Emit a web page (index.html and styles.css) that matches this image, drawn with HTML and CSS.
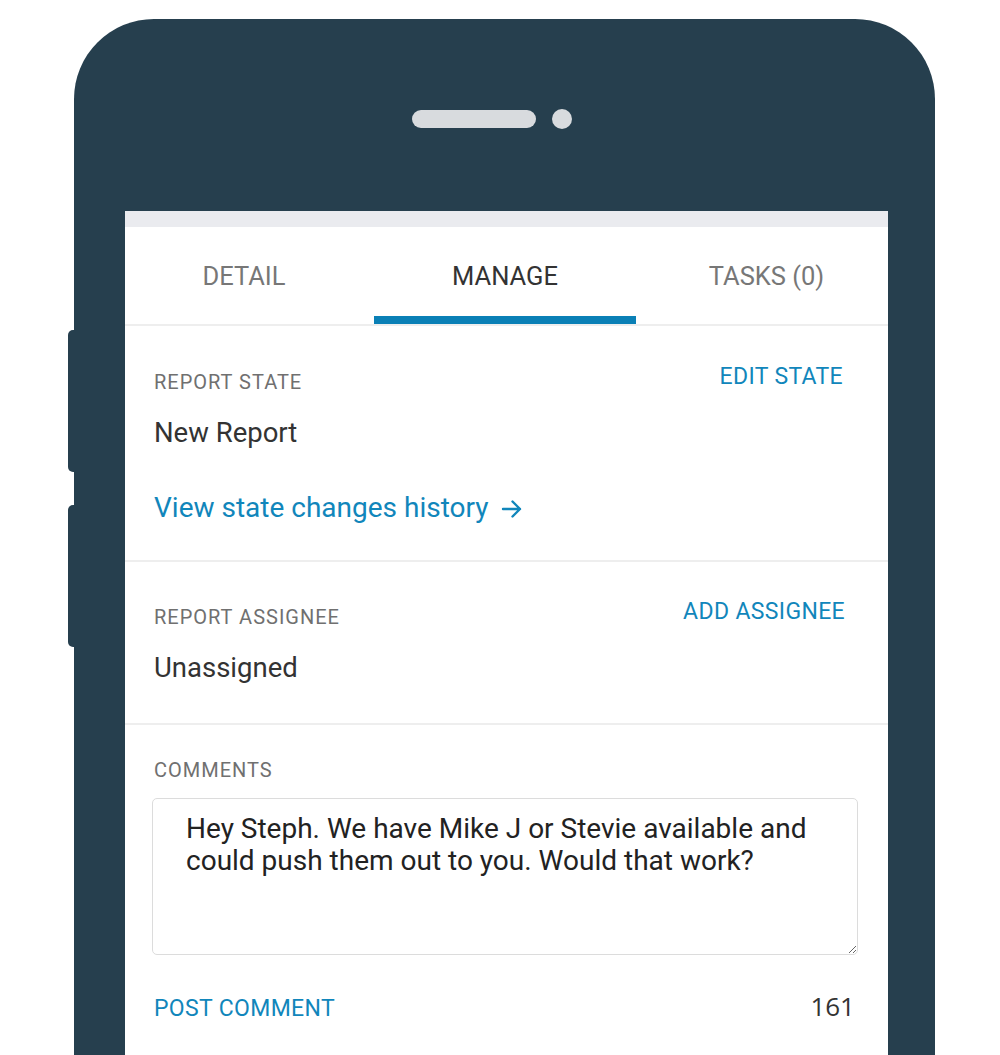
FILE: index.html
```html
<!DOCTYPE html>
<html lang="en">
<head>
<meta charset="utf-8">
<title>Manage report</title>
<link rel="stylesheet" href="styles.css">
</head>
<body>
<div class="phone">
  <span class="side-btn side-btn-1"></span>
  <span class="side-btn side-btn-2"></span>
  <div class="speaker-row">
    <span class="pill"></span>
    <span class="dot"></span>
  </div>
  <div class="screen">
    <div class="strip"></div>
    <nav class="tabs">
      <div class="tab tab-first">DETAIL</div>
      <div class="tab tab-active">MANAGE</div>
      <div class="tab tab-last">TASKS (0)</div>
    </nav>
    <section class="section section-state">
      <div class="head-row">
        <div class="label">REPORT STATE</div>
        <a class="action">EDIT STATE</a>
      </div>
      <div class="value">New Report</div>
      <a class="link">View state changes history<svg class="arrow" width="22" height="20" viewBox="0 0 22 20" aria-hidden="true"><path d="M2 10H19M11.5 2.5L19 10L11.5 17.5" fill="none" stroke="#1186bb" stroke-width="2.4" stroke-linecap="round" stroke-linejoin="round"/></svg></a>
    </section>
    <section class="section section-assignee">
      <div class="head-row">
        <div class="label">REPORT ASSIGNEE</div>
        <a class="action">ADD ASSIGNEE</a>
      </div>
      <div class="value">Unassigned</div>
    </section>
    <section class="section-comments">
      <div class="label comments-label">COMMENTS</div>
      <textarea class="comment-box">Hey Steph. We have Mike J or Stevie available and could push them out to you. Would that work?</textarea>
      <div class="post-row">
        <a class="action">POST COMMENT</a>
        <span class="count">161</span>
      </div>
    </section>
  </div>
</div>
</body>
</html>
```
FILE: styles.css
```css
html, body {
  margin: 0;
  padding: 0;
  background: #ffffff;
  height: 1055px;
  overflow: hidden;
}
body {
  font-family: Roboto, "Liberation Sans", sans-serif;
}
.phone {
  position: relative;
  box-sizing: border-box;
  width: 861px;
  height: 1100px;
  margin: 19px 0 0 74px;
  padding: 90px 47px 0 51px;
  background: #263f4e;
  border-radius: 80px 80px 0 0;
}
.side-btn {
  position: absolute;
  left: -6px;
  width: 10px;
  background: #263f4e;
  border-radius: 5px 0 0 5px;
}
.side-btn-1 { top: 311px; height: 142px; }
.side-btn-2 { top: 486px; height: 142px; }
.speaker-row {
  display: flex;
  align-items: center;
  gap: 16px;
  height: 20px;
  margin: 0 0 82px 287px;
}
.pill {
  width: 124px;
  height: 18px;
  border-radius: 9px;
  background: #d8dbde;
}
.dot {
  width: 20px;
  height: 20px;
  border-radius: 50%;
  background: #d8dbde;
}
.screen {
  background: #ffffff;
  height: 900px;
}
.strip {
  height: 16px;
  background: #eaebef;
}
.tabs {
  display: grid;
  grid-template-columns: 249px 262px 1fr;
  height: 97px;
  border-bottom: 2px solid #eeeeee;
}
.tab {
  display: flex;
  align-items: center;
  justify-content: center;
  font-size: 25.5px;
  color: #777777;
  box-sizing: border-box;
  padding-top: 1px;
}
.tab-first { padding-right: 11px; }
.tab-last { padding-left: 9px; }
.tab-active {
  color: #333333;
  border-bottom: 8px solid #0a80b6;
  padding-top: 9px;
}
.section {
  padding: 35px 43px 0 29px;
  border-bottom: 2px solid #eeeeee;
}
.section-state { height: 199px; }
.section-assignee {
  height: 125px;
  padding-top: 36px;
}
.head-row {
  display: flex;
  justify-content: space-between;
  align-items: flex-start;
}
.label {
  font-size: 20px;
  line-height: 24px;
  letter-spacing: 1px;
  color: #707070;
}
.head-row .label { margin-top: 9px; }
.section-assignee .head-row .label { margin-top: 7px; }
.section-state .action {
  margin-top: 2px;
  margin-right: 2px;
}
.action {
  font-size: 23px;
  line-height: 28px;
  letter-spacing: 0.35px;
  color: #1186bb;
  cursor: pointer;
}
.value {
  font-size: 27.5px;
  line-height: 30px;
  color: #333333;
  margin-top: 24px;
}
.link {
  display: flex;
  align-items: center;
  margin-top: 45px;
  font-size: 28px;
  line-height: 30px;
  color: #1186bb;
  cursor: pointer;
}
.arrow {
  margin-left: 12px;
  margin-top: 2px;
}
.section-comments {
  padding: 33px 30px 0 27px;
}
.comments-label {
  margin-left: 2px;
}
.comment-box {
  display: block;
  box-sizing: border-box;
  width: 706px;
  height: 157px;
  margin-top: 16px;
  padding: 14px 26px 0 33px;
  border: 1px solid #dcdcdc;
  border-radius: 5px;
  font-family: Roboto, "Liberation Sans", sans-serif;
  font-size: 28px;
  line-height: 32px;
  color: #222222;
  background: #ffffff;
  outline: none;
  resize: vertical;
}
.post-row {
  display: flex;
  justify-content: space-between;
  align-items: flex-start;
  margin-top: 40px;
  padding: 0 3px 0 2px;
}
.count {
  font-family: "Open Sans", Roboto, sans-serif;
  font-size: 26px;
  line-height: 28px;
  color: #333333;
  margin-top: -3px;
}
```
